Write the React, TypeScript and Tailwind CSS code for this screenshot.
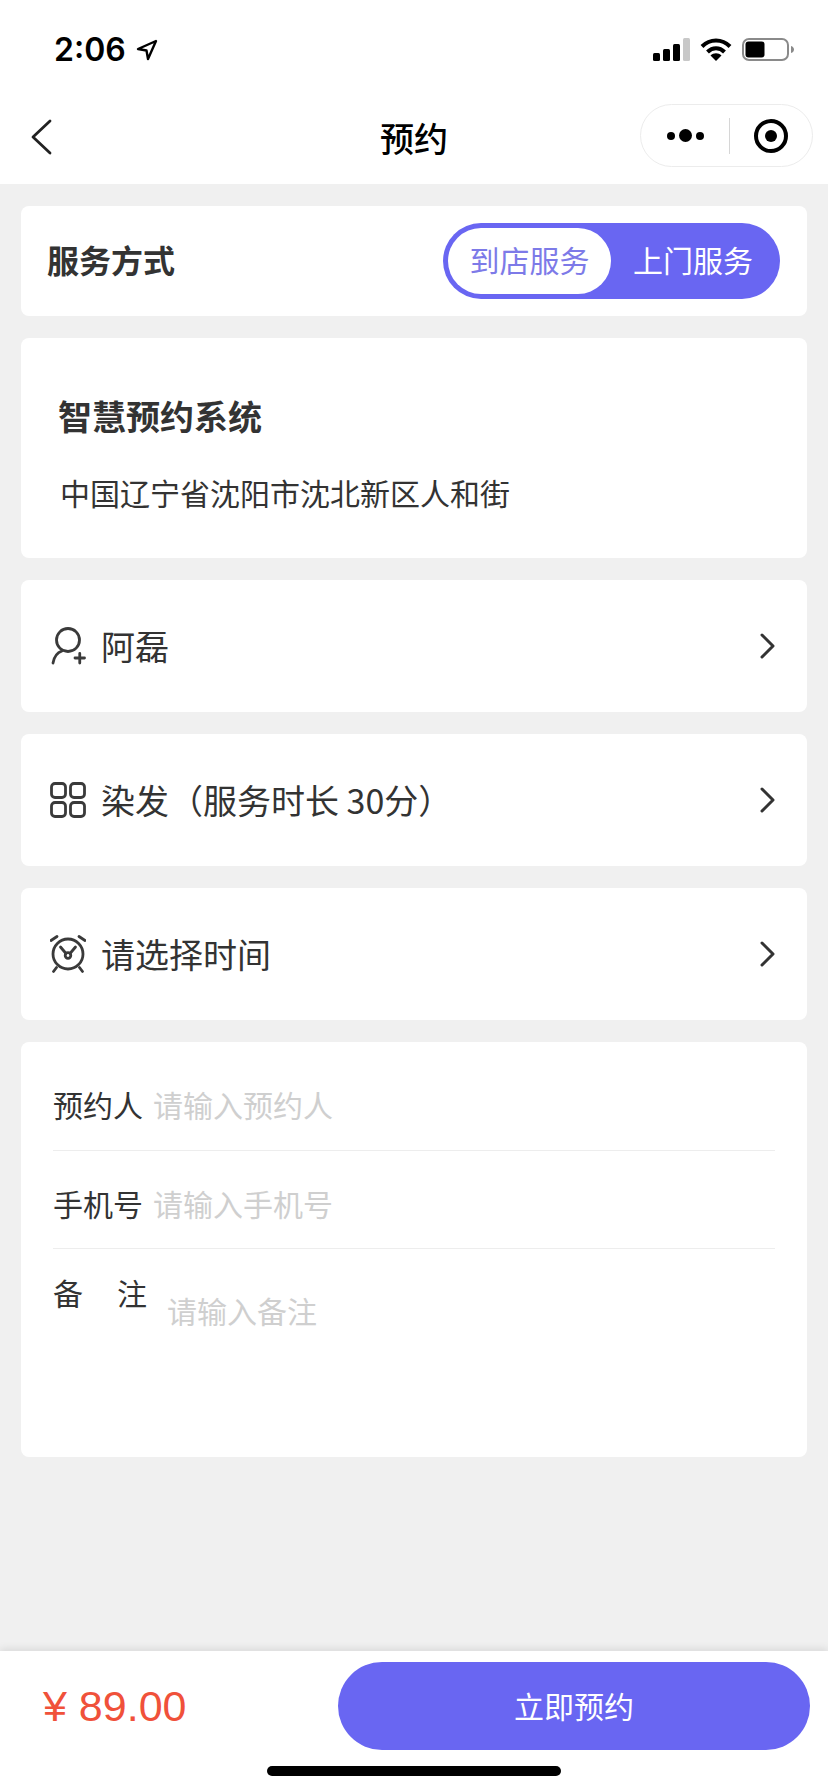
const cjk = "font-['Noto_Sans_CJK_SC','Liberation_Sans',sans-serif]"

function Chevron() {
  return (
    <svg width="18" height="28" viewBox="0 0 18 28" fill="none" stroke="#333" strokeWidth="3" strokeLinecap="round" strokeLinejoin="round">
      <path d="M3 3l11 11L3 25" />
    </svg>
  )
}

function PersonIcon() {
  return (
    <svg width="36" height="40" viewBox="0 0 36 40" fill="none" stroke="#3a3a3a" strokeWidth="2.8" strokeLinecap="round">
      <circle cx="18" cy="14" r="11.5" />
      <path d="M3 37c1-6 4.500-10.500 9-12" />
      <path d="M25 32h9.500M29.750 27.500v9.500" />
    </svg>
  )
}

function GridIcon() {
  return (
    <svg width="36" height="36" viewBox="0 0 36 36" fill="none" stroke="#3a3a3a" strokeWidth="2.8">
      <rect x="1.500" y="1.500" width="14" height="14" rx="3.500" />
      <rect x="20.500" y="1.500" width="14" height="14" rx="3.500" />
      <rect x="1.500" y="20.500" width="14" height="14" rx="3.500" />
      <rect x="20.500" y="20.500" width="14" height="14" rx="3.500" />
    </svg>
  )
}

function ClockIcon() {
  return (
    <svg width="36" height="38" viewBox="0 0 36 38" fill="none" stroke="#3a3a3a" strokeWidth="2.8" strokeLinecap="round">
      <circle cx="18" cy="19" r="15" />
      <path d="M1 5.500L7 1.500M35 5.500L29 1.500M3.500 36.500l3-4M32.500 36.500l-3-4" />
      <path d="M10.500 12l5.500 6.500M25.500 12L20 18.500" />
      <circle cx="18" cy="20.500" r="2.800" />
    </svg>
  )
}

function Row({ icon, label }: { icon: React.ReactNode; label: string }) {
  return (
    <div className="flex h-[132px] items-center rounded-[8px] bg-white pl-[29px] pr-[30px]">
      <div className="flex w-[36px] items-center justify-center">{icon}</div>
      <span className="ml-[15px] flex-1 text-[34px] leading-[44px] text-[#333]">{label}</span>
      <Chevron />
    </div>
  )
}

export default function App() {
  return (
    <div className={`flex h-[1792px] w-[828px] flex-col overflow-hidden bg-[#f0f0f0] ${cjk}`}>
      <div className="flex h-[92px] items-center justify-between bg-white pl-[54px] pr-[34px] pt-[7px]">
        <div className="flex items-center gap-[10px]">
          <span className="font-['Inter'] text-[32px] font-semibold leading-none text-black">2:06</span>
          <svg width="22" height="22" viewBox="0 0 22 22" fill="none" stroke="#000" strokeWidth="2.4" strokeLinejoin="round">
            <path d="M20 2L2 10l8.500 1.500 1.500 8.500z" />
          </svg>
        </div>
        <div className="flex items-center gap-[10px]">
          <svg width="37" height="23" viewBox="0 0 37 23">
            <rect x="0" y="15" width="7" height="8" rx="1.500" fill="#000" />
            <rect x="10" y="11" width="7" height="12" rx="1.500" fill="#000" />
            <rect x="20" y="6" width="7" height="17" rx="1.500" fill="#000" />
            <rect x="30" y="0" width="7" height="23" rx="1.500" fill="#c8c8c8" />
          </svg>
          <svg width="32" height="23" viewBox="0 0 32 23" fill="none" stroke="#000" strokeWidth="4">
            <path d="M2 8.500c8-8 20-8 28 0" />
            <path d="M7.500 14c5-5 12-5 17 0" />
            <path d="M16 23l-5.500-5.500c3-3 8-3 11 0z" fill="#000" stroke="none" />
          </svg>
          <svg width="52" height="23" viewBox="0 0 52 23">
            <rect x="1" y="1" width="45" height="21" rx="6" fill="none" stroke="#8a8a8a" strokeWidth="2" />
            <rect x="3.500" y="3.500" width="19" height="16" rx="3" fill="#000" />
            <path d="M49 8c2 .5 3 2 3 3.500s-1 3-3 3.500z" fill="#8a8a8a" />
          </svg>
        </div>
      </div>

      <div className="relative flex h-[92px] items-center justify-center bg-white">
        <svg width="22" height="36" viewBox="0 0 22 36" fill="none" stroke="#222" strokeWidth="2.800" strokeLinecap="round" strokeLinejoin="round" className="absolute left-[31px] top-[27px]">
          <path d="M19 2L2 18l17 16" />
        </svg>
        <span className="text-[34px] font-medium leading-none text-black">预约</span>
        <div className="absolute left-[640px] top-[12px] flex h-[63px] w-[173px] items-center rounded-full border border-[#ececec] bg-white">
          <div className="flex w-[88px] items-center justify-center gap-[4px]">
            <span className="h-[8px] w-[8px] rounded-full bg-black" />
            <span className="h-[13px] w-[13px] rounded-full bg-black" />
            <span className="h-[8px] w-[8px] rounded-full bg-black" />
          </div>
          <div className="h-[36px] w-px bg-[#d6d6d6]" />
          <div className="flex flex-1 items-center justify-center">
            <div className="flex h-[34px] w-[34px] items-center justify-center rounded-full border-[4px] border-black">
              <span className="h-[12px] w-[12px] rounded-full bg-black" />
            </div>
          </div>
        </div>
      </div>

      <div className="flex flex-col gap-[22px] px-[21px] pt-[22px]">
        <div className="flex h-[110px] items-center justify-between rounded-[8px] bg-white pl-[26px] pr-[27px]">
          <span className="mb-[5px] text-[32px] font-semibold text-[#333]">服务方式</span>
          <div className="flex h-[76px] w-[337px] items-center rounded-full bg-[#6966f2] p-[5px]">
            <div className="flex h-[66px] w-[163px] items-center justify-center rounded-full bg-white pb-[4px] text-[30px] text-[#7d7ae8]">到店服务</div>
            <div className="flex flex-1 items-center justify-center pb-[4px] text-[30px] text-white">上门服务</div>
          </div>
        </div>

        <div className="flex h-[220px] flex-col justify-center rounded-[8px] bg-white pl-[37px] pt-[8px]">
          <div className="text-[34px] font-semibold leading-[46px] text-[#333]">智慧预约系统</div>
          <div className="mt-[33px] pl-[2px] text-[30px] leading-[40px] text-[#333]">中国辽宁省沈阳市沈北新区人和街</div>
        </div>

        <Row icon={<PersonIcon />} label="阿磊" />
        <Row icon={<GridIcon />} label="染发（服务时长 30分）" />
        <Row icon={<ClockIcon />} label="请选择时间" />

        <div className="flex h-[415px] flex-col rounded-[8px] bg-white pl-[32px] pr-[32px]">
          <div className="flex h-[109px] items-center border-b border-[#ededed] pt-[16px]">
            <span className="w-[100px] text-[30px] text-[#333]">预约人</span>
            <span className="text-[30px] text-[#cfcfcf]">请输入预约人</span>
          </div>
          <div className="flex h-[98px] items-center border-b border-[#ededed] pt-[8px]">
            <span className="w-[100px] text-[30px] text-[#333]">手机号</span>
            <span className="text-[30px] text-[#cfcfcf]">请输入手机号</span>
          </div>
          <div className="flex items-start pt-[21px]">
            <span className="flex w-[94px] justify-between text-[30px] text-[#333]">
              <span>备</span>
              <span>注</span>
            </span>
            <span className="ml-[20px] mt-[18px] text-[30px] text-[#cfcfcf]">请输入备注</span>
          </div>
        </div>
      </div>

      <div className="mt-auto flex h-[141px] flex-col bg-white shadow-[0_-2px_8px_rgba(0,0,0,0.1)]">
        <div className="flex items-center pt-[11px]">
          <span className="ml-[43px] w-[295px] font-['Liberation_Sans'] text-[43px] leading-none text-[#f0513a]">¥ 89.00</span>
          <div className="flex h-[88px] w-[472px] items-center justify-center rounded-full bg-[#6966f2] pb-[2px] text-[30px] text-white">立即预约</div>
        </div>
        <div className="mx-auto mt-[16px] h-[10px] w-[294px] rounded-full bg-black" />
      </div>
    </div>
  )
}
